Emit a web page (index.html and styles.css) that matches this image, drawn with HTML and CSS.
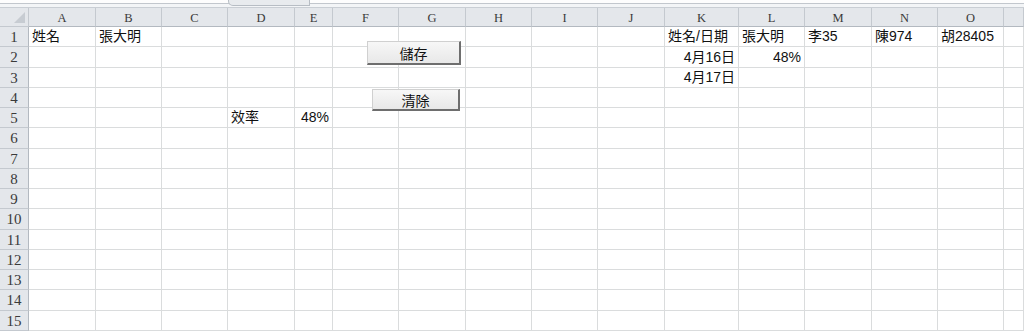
FILE: index.html
```html
<!DOCTYPE html>
<html lang="zh-Hant">
<head>
    <meta charset="UTF-8" />
    <title>工作表</title>
    <link rel="stylesheet" href="styles.css">
</head>
<body>
    <div class="sheet">
        <div class="topbar"><div class="tab"></div></div>
        <div class="grid" id="grid"></div>

        <button class="btn btn-save">儲存</button>
        <button class="btn btn-clear">清除</button>
    </div>

    <script>
        const grid = document.getElementById('grid');
        const cols = 'ABCDEFGHIJKLMNO'.split('');
        const rowCount = 15;

        const cells = {
            A1: '姓名', B1: '張大明',
            K1: '姓名/日期', L1: '張大明', M1: '李35', N1: '陳974', O1: '胡28405',
            K2: '4月16日', L2: '48%',
            K3: '4月17日',
            D5: '效率', E5: '48%'
        };
        const rightAligned = ['K2', 'K3', 'L2', 'E5'];

        function addCell(className, text) {
            const div = document.createElement('div');
            div.className = className;
            div.textContent = text || '';
            grid.appendChild(div);
        }

        addCell('corner');
        cols.forEach(c => addCell('col-head', c));
        // column P is only partly on screen, its letter is out of view
        addCell('col-head');

        for (let r = 1; r <= rowCount; r++) {
            addCell('row-head', r);
            cols.forEach(c => {
                const ref = c + r;
                addCell(rightAligned.includes(ref) ? 'cell num' : 'cell', cells[ref]);
            });
            addCell('cell');
        }
    </script>
</body>
</html>
```

FILE: styles.css
```css
* {
    box-sizing: border-box;
}

body {
    margin: 0;
    background: #fff;
    overflow: hidden;
    font-family: "Liberation Sans", "Noto Sans CJK TC", sans-serif;
}

.sheet {
    position: relative;
    width: 1024px;
    height: 331px;
    overflow: hidden;
}

.topbar {
    position: relative;
    height: 8px;
    background: #f3f5f7;
    border-top: 3px solid #fdfdfd;
    border-bottom: 1px solid #c9ced4;
}

.topbar::before {
    content: "";
    position: absolute;
    left: 0;
    right: 0;
    top: 0;
    border-top: 1px solid #c2c7cd;
}

.tab {
    position: absolute;
    left: 228px;
    top: -3px;
    width: 82px;
    height: 6px;
    background: #e8ebee;
    border: 1px solid #b7bdc4;
    border-top: none;
    border-radius: 0 0 0 5px;
}

.grid {
    display: grid;
    grid-template-columns: 29px 67px 66px 66px 67px 38px 66px 67px 66px 66px 67px 74px 66px 67px 66px 66px 20px;
    grid-template-rows: 19px repeat(15, 20.25px);
}

.corner,
.col-head,
.row-head {
    background: #e4e7eb;
    border-right: 1px solid #c4c9cf;
    border-bottom: 1px solid #c4c9cf;
    color: #3a3a3a;
    font-family: "Liberation Serif", serif;
    display: flex;
    align-items: center;
    justify-content: center;
}

.corner {
    position: relative;
}

.corner::after {
    content: "";
    position: absolute;
    right: 3px;
    bottom: 3px;
    width: 11px;
    height: 11px;
    background: #c7ccd2;
    clip-path: polygon(100% 0, 100% 100%, 0 100%);
}

.col-head {
    font-size: 12.5px;
    padding-top: 2px;
    border-bottom-color: #b3b9c0;
}

.row-head {
    font-size: 15px;
    line-height: 16px;
    padding-top: 1px;
    border-right-color: #b3b9c0;
}

.cell {
    border-right: 1px solid #dadcdd;
    border-bottom: 1px solid #dadcdd;
    font-size: 14px;
    line-height: 16px;
    color: #111;
    padding: 0 3px 2px;
    display: flex;
    align-items: flex-end;
    white-space: nowrap;
}

.cell.num {
    justify-content: flex-end;
}

.btn {
    position: absolute;
    margin: 0;
    padding: 0;
    font-family: "Noto Sans CJK TC", sans-serif;
    font-size: 14px;
    color: #111;
    background: linear-gradient(#f7f7f7, #e8e8e8);
    border: 1px solid #d0d0d0;
    border-right: 2px solid #6e6e6e;
    border-bottom: 2px solid #6e6e6e;
    cursor: pointer;
}

.btn-save {
    left: 367px;
    top: 41px;
    width: 94px;
    height: 24px;
}

.btn-clear {
    left: 372px;
    top: 89px;
    width: 88px;
    height: 22px;
}
```
